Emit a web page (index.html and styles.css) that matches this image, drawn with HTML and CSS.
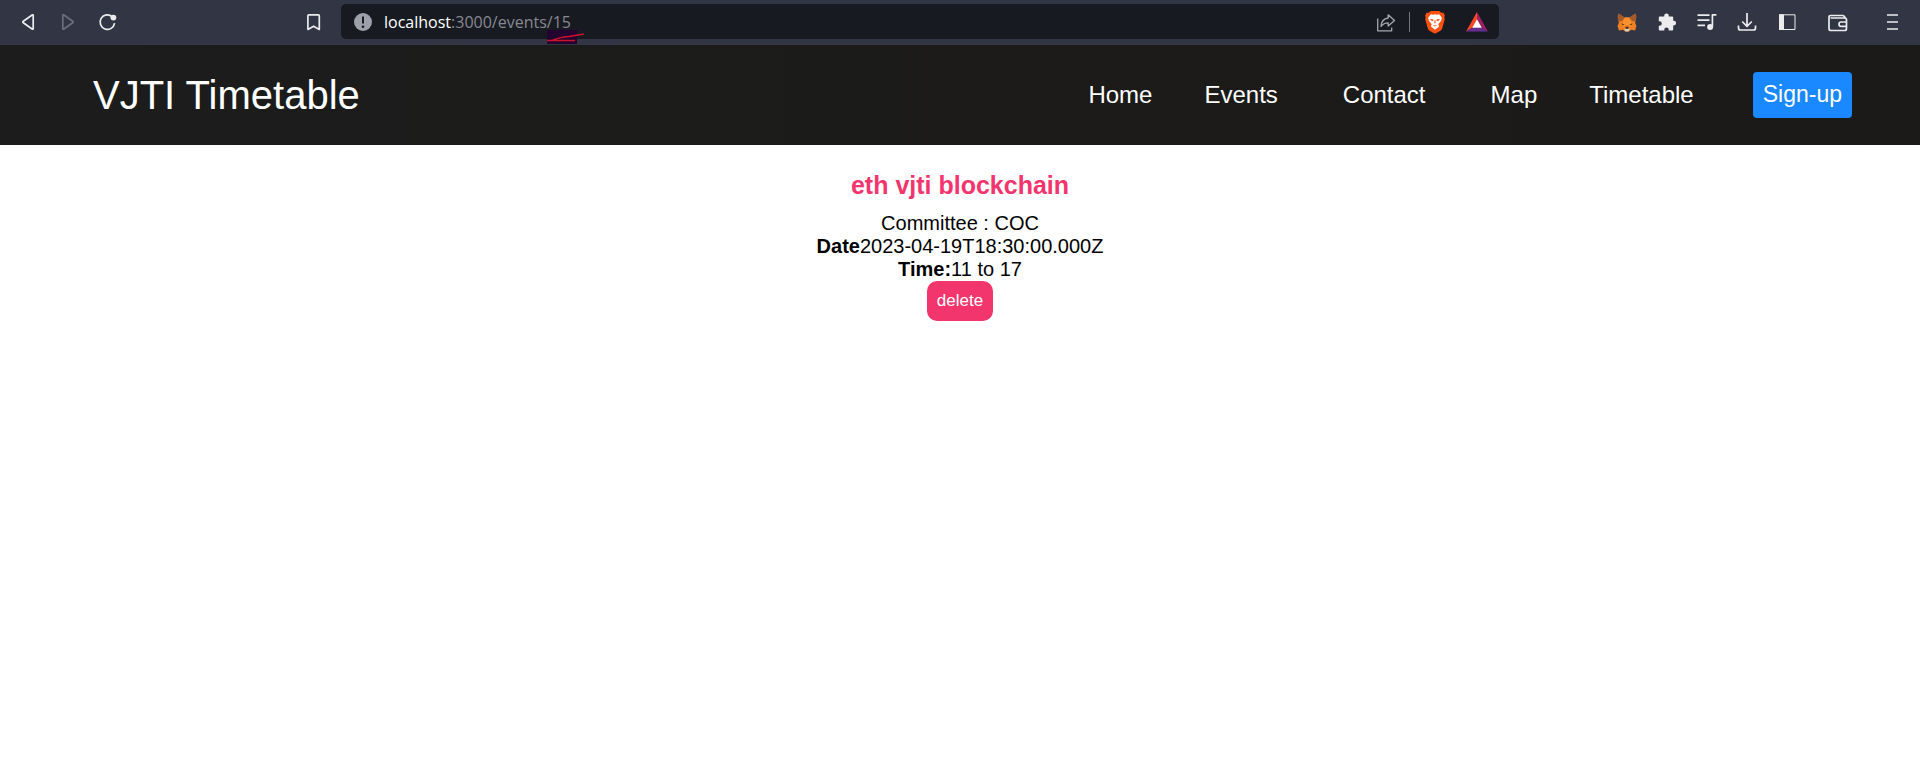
FILE: index.html
```
<!DOCTYPE html>
<html lang="en">
<head>
<meta charset="utf-8">
<meta name="viewport" content="width=device-width, initial-scale=1">
<title>VJTI Timetable</title>
<link rel="stylesheet" href="styles.css">
</head>
<body>
<div class="toolbar">
  <div class="tools tools-left">
    <button class="tool" aria-label="Back"><svg viewBox="0 0 20 20"><path d="M15.2 3.6v12.8q0 1.3-1.1.6L5.3 10.8q-1-.8 0-1.6l8.8-6.2q1.1-.7 1.1.6z"/></svg></button>
    <button class="tool tool-off" aria-label="Forward" disabled><svg viewBox="0 0 20 20"><path d="M4.8 3.6v12.8q0 1.3 1.1.6l8.8-6.2q1-.8 0-1.6L5.9 3q-1.1-.7-1.1.6z"/></svg></button>
    <button class="tool" aria-label="Reload"><svg viewBox="0 0 20 20"><path d="M14.2 4.600A7.300 7.300 0 1 0 16.600 11.200"/><circle class="solid" cx="15.400" cy="5.600" r="2.900"/></svg></button>
    <button class="tool tool-bookmark" aria-label="Bookmark"><svg viewBox="0 0 20 20"><path d="M4.8 2.9h9.6q.9 0 .9.9v13.6l-5.7-3.2-5.7 3.2V3.8q0-.9.9-.9z"/></svg></button>
  </div>
  <div class="address">
    <svg class="info" viewBox="0 0 20 20"><circle class="info-disc" cx="10" cy="10" r="9"/><path class="info-mark" d="M10 4.5v7"/><circle class="info-dot" cx="10" cy="14.7" r="1.3"/></svg>
    <div class="url"><span class="host">localhost</span>:3000/events<span class="marked">/15<svg class="scribble" viewBox="0 0 38 16"><path class="scribble-box" d="M0 1h30v14H0z"/><path class="scribble-line" d="M0 11.5h28M6 11Q12 8.500 22 7.500L37 5"/></svg></span></div>
    <button class="tool tool-share" aria-label="Share"><svg viewBox="0 0 20 20"><path d="M1.700 6.500v12.300h14v-3.300M5 14.500q.3-7.500 7.200-8.500V2.800l6.300 5.700-6.300 5.600v-3.300Q7.500 10.800 5 14.500z"/></svg></button>
    <span class="divider"></span>
    <button class="tool tool-brand" aria-label="Shields"><svg viewBox="0 0 20 24"><path fill="#fb5010" d="M5.800 1h8.400l2.100 1.700 2.100.1 1.500 2.700-.7 2 .6 1.600-2.600 9.400q-.4 1.200-1.400 1.900L11 23.200q-1 .6-2 0l-4.800-2.800q-1-.7-1.400-1.900L.2 9.100l.6-1.600-.7-2 1.500-2.700 2.100-.1z"/><path fill="#fff" d="m5.800 4.300 2.200.4 2-.5 2 .5 2.200-.4 2.700 3.400-.9 3.300-2.700 3.200.8 2.200L10 19.800l-4.100-3.400.8-2.200L4 11l-.9-3.300z"/><path fill="#fb5010" d="m5 8.800 3.600.8-.5 1.700-2-.9zm10 0-3.600.8.5 1.700 2-.9zM9.600 10h.8l.2 3-.6.500-.6-.5zM7.300 14.600l2.700 1 2.700-1-2.700 2z"/></svg></button>
    <button class="tool tool-brand tool-rewards" aria-label="Rewards"><svg viewBox="0 0 22 20"><path fill="#ff4724" d="M11 0 0 19.500l6.500-4L11 7.500z"/><path fill="#9e1f63" d="m11 0 11 19.500-6.500-4L11 7.500z"/><path fill="#662d91" d="M0 19.500h22l-6.500-4h-9z"/><path fill="#fff" d="m11 7.200 4.800 8.500H6.200z"/></svg></button>
  </div>
  <div class="tools tools-right">
    <button class="tool" aria-label="Wallet extension"><svg viewBox="0 0 20 20"><g stroke="none"><path fill="#ef8023" d="M1.500 3 7 5.500h6L18.500 3l-.3 8 1.300 3-1.500 4.500-4-.8-2 1.800H8l-2-1.800-4 .8L.5 14l1.300-3z"/><path fill="#a65a2b" d="M1.500 1.200 8 5.500 5 9l-3.800.5L.5 4.500zm17 0L12 5.500 15 9l3.800.5.7-5z"/><path fill="#f8922e" d="M8 5.500h4l2.500 5.500-1.300 4-1.700-2h-3l-1.700 2-1.300-4z"/><path fill="#432b20" d="m4.500 11.300 3.200 1.500-2.200.1zm11 0-3.200 1.500 2.200.1zM8.300 15.500l.7-.7h2l.7.7-.4 1.300H8.700z"/><path fill="#d8cdc4" d="m7 16.500 1.800.6h2.400l1.800-.6-1.700 3H8.700z"/></g></svg></button>
    <button class="tool" aria-label="Extensions"><svg viewBox="0 0 20 20"><path class="solid" d="M3.500 4.500h3.700V3.800a2.300 2.300 0 0 1 4.600 0v.7h3.400q1 0 1 1v3.300h.6a2.300 2.300 0 0 1 0 4.600h-.6v4q0 1-1 1h-3.500v-.8a2.200 2.200 0 0 0-4.400 0v.8H2.800q-1 0-1-1v-3.700h.8a2.200 2.200 0 0 0 0-4.400h-.8V5.500q0-1 1-1z"/></svg></button>
    <button class="tool" aria-label="Media"><svg viewBox="0 0 20 20"><path d="M.5 3.200h12M.5 8.200h12M.5 13.400h7.500"/><path d="M15.400 14.500V2.800h4"/><circle class="solid" cx="13.100" cy="15" r="3"/></svg></button>
    <button class="tool" aria-label="Downloads"><svg viewBox="0 0 20 20"><path d="M10 1v13M5.200 9.500 10 14.300l4.800-4.800M1.500 13.500V16q0 2 2 2h13q2 0 2-2v-2.500"/></svg></button>
    <button class="tool" aria-label="Sidebar"><svg viewBox="0 0 20 20"><path class="thin" d="M2.500 2.800h15.500v14.700H2.500z"/><path class="solid" d="M2 2.300h5v15.700H2z"/></svg></button>
    <button class="tool tool-wallet" aria-label="Wallet"><svg viewBox="0 0 20 20"><path d="M15.500 3.500H2.700Q1 3.500 1 5.200v11.300q0 2 2 2h13.500q2 0 2-2V8q0-2-2-2H2.500M15.500 3.500l2.300 3"/><path d="M19 10h-6q-2 0-2 2.200t2 2.200h6"/></svg></button>
    <button class="tool tool-menu" aria-label="Menu"><svg viewBox="0 0 20 20"><path d="M5 3h11M5 10h11M5 17h11"/></svg></button>
  </div>
</div>
<header class="header">
  <div class="brand">VJTI Timetable</div>
  <nav class="nav">
    <a class="link" href="#">Home</a>
    <a class="link link-wide" href="#">Events</a>
    <a class="link link-wide" href="#">Contact</a>
    <a class="link" href="#">Map</a>
    <a class="link" href="#">Timetable</a>
    <button class="signup">Sign-up</button>
  </nav>
</header>
<main class="event">
  <h1 class="title">eth vjti blockchain</h1>
  <p class="line">Committee : COC</p>
  <p class="line"><b>Date</b>2023-04-19T18:30:00.000Z</p>
  <p class="line"><b>Time:</b>11 to 17</p>
  <button class="delete">delete</button>
</main>
</body>
</html>
```
FILE: styles.css
```
* { box-sizing: border-box; }
body {
  margin: 0;
  background: #fff;
  color: #000;
  font-family: "Liberation Sans", Arial, sans-serif;
}
button { border: 0; font-family: inherit; cursor: pointer; }

.toolbar {
  display: flex;
  align-items: center;
  height: 45px;
  padding: 0 18px 2px;
  background: #323544;
}
.tools { display: flex; align-items: center; gap: 20px; flex: none; }
.tools-left { width: 306px; margin-right: 17px; }
.tools-right { margin-left: 118px; }
.tool { flex: none; width: 20px; height: 20px; padding: 0; background: none; color: #ececee; }
.tool svg {
  display: block;
  width: 100%;
  height: 100%;
  fill: none;
  stroke: currentColor;
  stroke-width: 1.7;
  stroke-linejoin: round;
}
.tool .solid { fill: currentColor; stroke: none; }
.tool .thin { stroke-width: 1; }
.tool-off { color: #6c6f7a; }
.tool-bookmark { margin-left: auto; }
.tool-wallet { margin-left: 11px; }
.tool-menu { margin-left: 14px; }

.address {
  display: flex;
  align-items: center;
  flex: 1;
  min-width: 0;
  height: 35px;
  padding: 0 11px 0 12px;
  border-radius: 5px;
  background: #181a21;
}
.info { width: 20px; height: 20px; }
.info-disc { fill: #9da0aa; }
.info-mark { stroke: #181a21; stroke-width: 2; }
.info-dot { fill: #181a21; }
.url {
  flex: 1;
  margin-left: 11px;
  color: #868991;
  font: 16px/24px "Open Sans", "Noto Sans", sans-serif;
  white-space: nowrap;
}
.host { color: #fff; }
.marked { position: relative; }
.scribble { position: absolute; left: 0; top: 18px; width: 38px; height: 16px; }
.scribble-box { fill: #240330; }
.scribble-line { fill: none; stroke: #d0112b; stroke-width: 1.5; }
.tool-share { color: #a5a7ad; }
.tool-share svg { stroke-width: 1.3; }
.divider { width: 1px; height: 20px; margin: 0 15px 0 13px; background: #74767c; }
.tool-brand { height: 24px; }
.tool-brand svg { stroke: none; }
.tool-rewards { width: 22px; height: 20px; margin-left: 21px; }

.header {
  display: flex;
  align-items: center;
  justify-content: space-between;
  height: 100px;
  padding: 0 68px 0 93px;
  background: linear-gradient(90deg, #1c1c1c, #1b1a18);
  color: #fff;
}
.brand { font-size: 40px; line-height: 46px; }
.nav { display: flex; align-items: center; font-size: 24px; line-height: 28px; }
.link { margin-right: 52px; color: inherit; text-decoration: none; }
.link-wide { margin-right: 65px; }
.signup {
  height: 46px;
  margin-left: 7px;
  padding: 0 10px 2px;
  border-radius: 4px;
  background: #1a88ff;
  color: #fff;
  font-size: 23px;
}

.event { display: flex; flex-direction: column; align-items: center; padding-top: 26px; }
.title { margin: 0 0 13px; color: #f2356d; font-size: 25px; line-height: 28px; }
.line { margin: 0; font-size: 20px; line-height: 23px; }
.delete {
  height: 40px;
  padding: 0 10px;
  border-radius: 10px;
  background: #f2356d;
  color: #fff;
  font-size: 17px;
}
```
